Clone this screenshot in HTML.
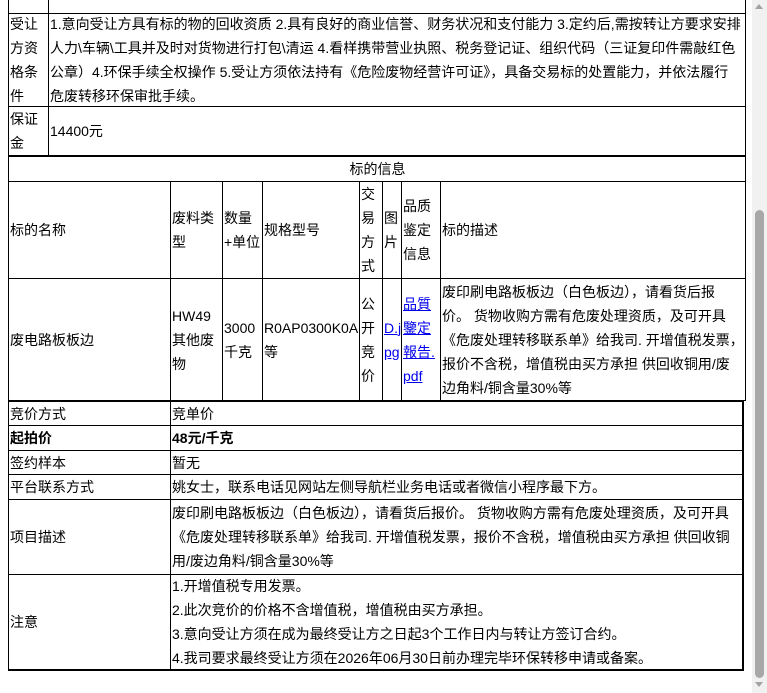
<!DOCTYPE html><html><head><meta charset="utf-8"><style>
body{margin:0;width:767px;height:693px;overflow:hidden;background:#fff;font-family:"Liberation Sans","Noto Sans CJK SC",sans-serif;font-size:14px;color:#000;position:relative}
.c{position:absolute;border:1px solid #000;box-sizing:border-box;display:flex;align-items:center;line-height:24px;padding-left:1px;overflow:hidden}
.c>div{width:100%}
.n>div{white-space:nowrap}
a{color:#00e;text-decoration:underline}
.h{position:absolute;background:#000}
</style></head><body>
<div class="c" style="left:8px;top:-20px;width:738px;height:34px"></div>
<div class="h" style="left:48px;top:0;width:1px;height:14px"></div>
<div class="c n" style="left:8px;top:13px;width:41px;height:94px"><div>受让<br>方资<br>格条<br>件</div></div>
<div class="c n" style="left:48px;top:13px;width:698px;height:94px"><div>1.意向受让方具有标的物的回收资质 2.具有良好的商业信誉、财务状况和支付能力 3.定约后,需按转让方要求安排<br>人力\车辆\工具并及时对货物进行打包\清运 4.看样携带营业执照、税务登记证、组织代码（三证复印件需敲红色<br>公章）4.环保手续全权操作 5.受让方须依法持有《危险废物经营许可证》，具备交易标的处置能力，并依法履行<br>危废转移环保审批手续。</div></div>
<div class="c n" style="left:8px;top:106px;width:41px;height:50px"><div>保证<br>金</div></div>
<div class="c" style="left:48px;top:106px;width:698px;height:50px"><div>14400元</div></div>
<div class="h" style="left:8px;top:155px;width:738px;height:2px"></div>
<div class="c" style="left:8px;top:156px;width:738px;height:26px;justify-content:center"><div style="text-align:center">标的信息</div></div>
<div class="c" style="left:8px;top:181px;width:163px;height:98px"><div>标的名称</div></div>
<div class="c n" style="left:170px;top:181px;width:53px;height:98px"><div>废料类<br>型</div></div>
<div class="c n" style="left:222px;top:181px;width:41px;height:98px"><div>数量<br>+单位</div></div>
<div class="c" style="left:262px;top:181px;width:98px;height:98px"><div>规格型号</div></div>
<div class="c n" style="left:359px;top:181px;width:24px;height:98px"><div>交<br>易<br>方<br>式</div></div>
<div class="c n" style="left:382px;top:181px;width:20px;height:98px"><div>图<br>片</div></div>
<div class="c n" style="left:401px;top:181px;width:40px;height:98px"><div>品质<br>鉴定<br>信息</div></div>
<div class="c" style="left:440px;top:181px;width:306px;height:98px"><div>标的描述</div></div>
<div class="c" style="left:8px;top:278px;width:163px;height:123px"><div>废电路板板边</div></div>
<div class="c n" style="left:170px;top:278px;width:53px;height:123px"><div>HW49<br>其他废<br>物</div></div>
<div class="c n" style="left:222px;top:278px;width:41px;height:123px"><div>3000<br>千克</div></div>
<div class="c n" style="left:262px;top:278px;width:98px;height:123px"><div>R0AP0300K0A<br>等</div></div>
<div class="c n" style="left:359px;top:278px;width:24px;height:123px"><div>公<br>开<br>竞<br>价</div></div>
<div class="c n" style="left:382px;top:278px;width:20px;height:123px"><div><a>D.j<br>pg</a></div></div>
<div class="c n" style="left:401px;top:278px;width:40px;height:123px"><div><a>品質<br>鑒定<br>報告.<br>pdf</a></div></div>
<div class="c n" style="left:440px;top:278px;width:306px;height:123px"><div>废印刷电路板板边（白色板边），请看货后报<br>价。 货物收购方需有危废处理资质，及可开具<br>《危废处理转移联系单》给我司. 开增值税发票，<br>报价不含税，增值税由买方承担 供回收铜用/废<br>边角料/铜含量30%等</div></div>
<div class="c" style="left:8px;top:400px;width:163px;height:26px;border-top-width:2px"><div>竞价方式</div></div>
<div class="c" style="left:170px;top:400px;width:574px;height:26px;border-top-width:2px;border-right-width:2px"><div>竞单价</div></div>
<div class="c" style="left:8px;top:425px;width:163px;height:26px;font-weight:bold"><div>起拍价</div></div>
<div class="c" style="left:170px;top:425px;width:574px;height:26px;font-weight:bold;border-right-width:2px"><div>48元/千克</div></div>
<div class="c" style="left:8px;top:450px;width:163px;height:25px"><div>签约样本</div></div>
<div class="c" style="left:170px;top:450px;width:574px;height:25px;border-right-width:2px"><div>暂无</div></div>
<div class="c" style="left:8px;top:474px;width:163px;height:26px"><div>平台联系方式</div></div>
<div class="c" style="left:170px;top:474px;width:574px;height:26px;border-right-width:2px"><div>姚女士，联系电话见网站左侧导航栏业务电话或者微信小程序最下方。</div></div>
<div class="c" style="left:8px;top:499px;width:163px;height:76px"><div>项目描述</div></div>
<div class="c n" style="left:170px;top:499px;width:574px;height:76px;border-right-width:2px"><div>废印刷电路板板边（白色板边），请看货后报价。 货物收购方需有危废处理资质，及可开具<br>《危废处理转移联系单》给我司. 开增值税发票，报价不含税，增值税由买方承担 供回收铜<br>用/废边角料/铜含量30%等</div></div>
<div class="c" style="left:8px;top:574px;width:163px;height:97px;border-bottom-width:2px"><div>注意</div></div>
<div class="c n" style="left:170px;top:574px;width:574px;height:97px;border-right-width:2px;border-bottom-width:2px"><div>1.开增值税专用发票。<br>2.此次竞价的价格不含增值税，增值税由买方承担。<br>3.意向受让方须在成为最终受让方之日起3个工作日内与转让方签订合约。<br>4.我司要求最终受让方须在2026年06月30日前办理完毕环保转移申请或备案。</div></div>
<div style="position:absolute;left:752px;top:0;width:15px;height:693px;background:#f1f1f1"></div>
<div style="position:absolute;left:755px;top:210px;width:9px;height:468px;background:#a8a8a8;border-radius:5px"></div>
<div style="position:absolute;left:755px;top:682px;width:0;height:0;border-left:4px solid transparent;border-right:4px solid transparent;border-top:5px solid #a3a3a3"></div>
<div style="position:absolute;left:755px;top:4px;width:0;height:0;border-left:4px solid transparent;border-right:4px solid transparent;border-bottom:5px solid #a3a3a3"></div>
</body></html>
